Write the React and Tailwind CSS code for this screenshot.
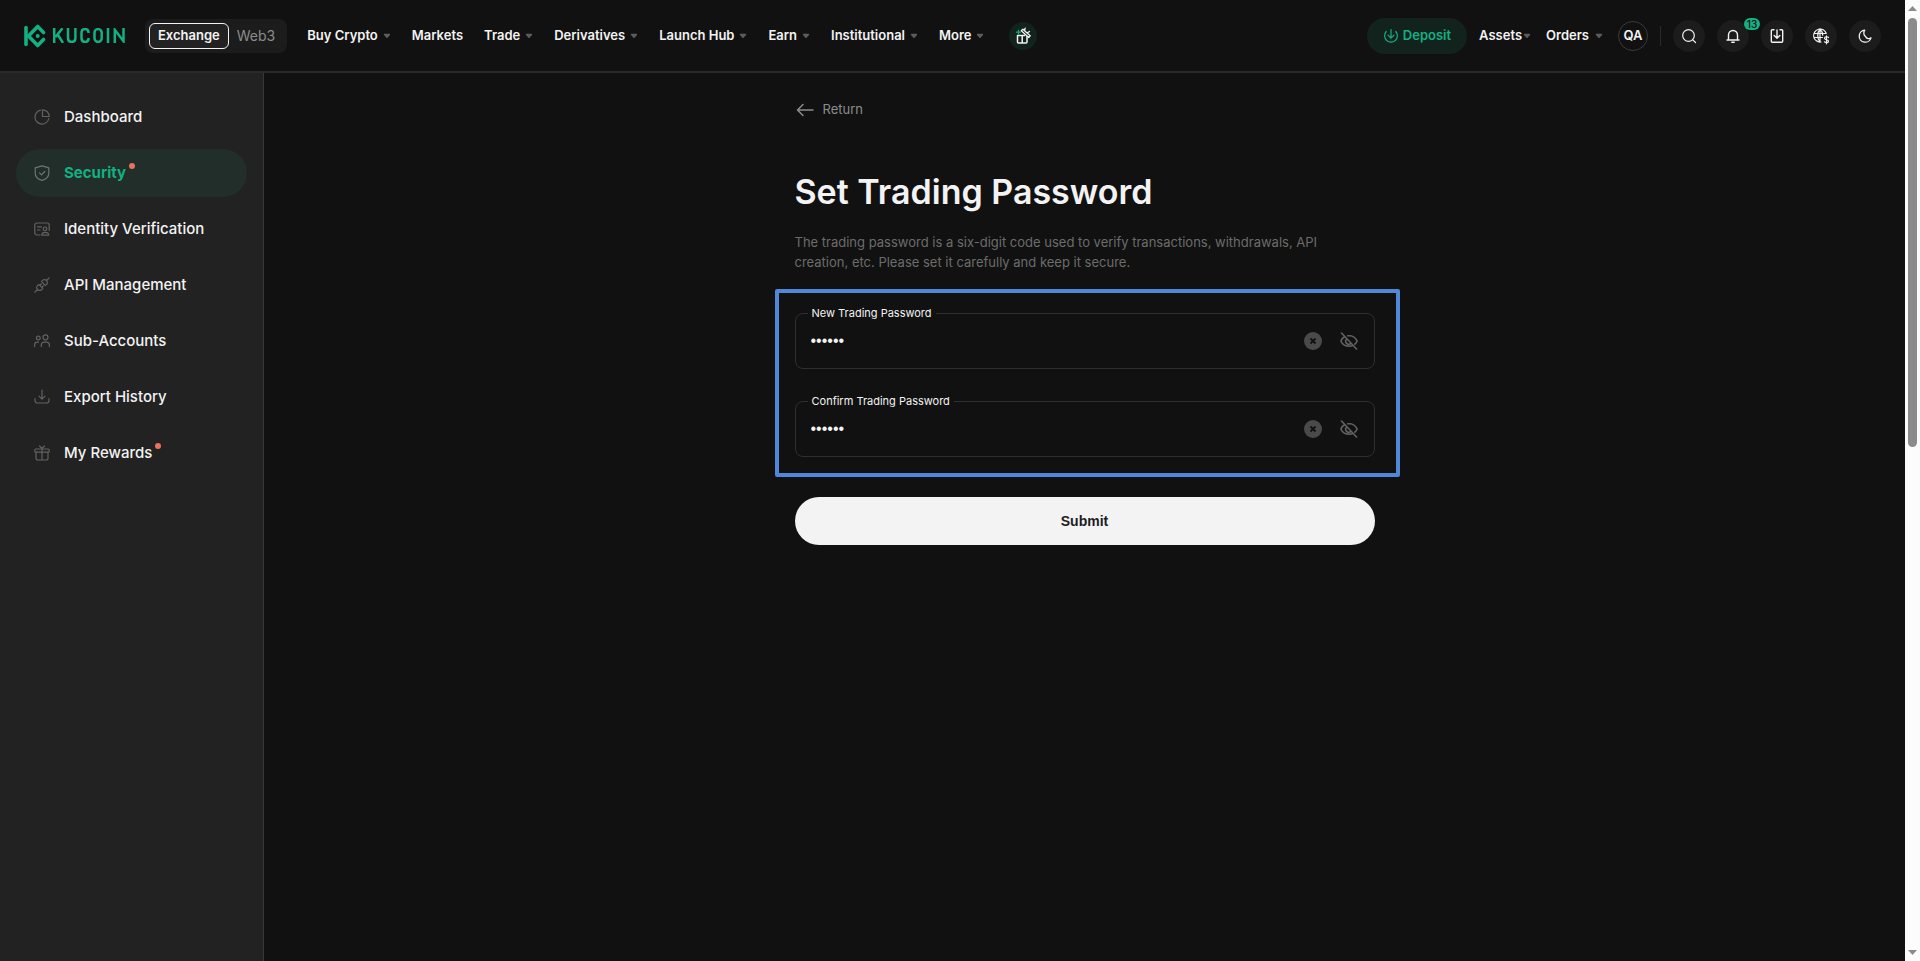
import { useState } from "react";

const Icon = ({ children, className = "size-4", box = "0 0 16 16" }) => (
  <svg viewBox={box} className={className} fill="none" stroke="currentColor" strokeWidth="1.2" strokeLinecap="round" strokeLinejoin="round" aria-hidden="true">
    {children}
  </svg>
);

const Caret = () => (
  <svg viewBox="0 0 8 6" className="h-[6px] w-2 text-[#5c5c5c]" fill="currentColor" aria-hidden="true">
    <path d="M1.6.8h4.8c.7 0 1 .7.6 1.200L4.600 4.700c-.3.4-.9.4-1.200 0L1 2C.6 1.500.900.8 1.600.8z" />
  </svg>
);

const Logo = () => (
  <a href="#home" aria-label="KuCoin" className="flex shrink-0 items-center gap-[7px] text-[#13b082]">
    <svg viewBox="0 0 22 24" className="h-6 w-[22px]" fill="none" stroke="currentColor" strokeWidth="3.600" strokeLinecap="round" strokeLinejoin="round" aria-hidden="true">
      <path d="M2 3.500v17" />
      <path d="M19.500 8.500 13.700 2.500 4.500 12l9.200 9.500 5.800-6" />
      <circle cx="13.700" cy="12" r="2" fill="currentColor" stroke="none" />
    </svg>
    <svg viewBox="0 0 73 15" className="h-[15px] w-[73px]" fill="none" stroke="currentColor" strokeWidth="2.500" aria-hidden="true">
      <path d="M1.200 0v15M9.500.2 2.500 9M4.700 6.500l5.300 8.400" />
      <path d="M15 0v10.200c0 2.400 1.500 3.700 3.700 3.700s3.700-1.300 3.700-3.700V0" />
      <path d="M35.500 5V4.500c0-2.200-1.400-3.400-3.400-3.400s-3.600 1.300-3.600 3.600v5.600c0 2.300 1.500 3.600 3.600 3.600s3.400-1.200 3.400-3.400V10" />
      <rect x="41.500" y="1.100" width="7.200" height="12.800" rx="3.600" />
      <path d="M55 0v15M61.800 15V1.800l8.700 11.400V0" />
    </svg>
  </a>
);

const menu = [
  ["Buy Crypto", true],
  ["Markets", false],
  ["Trade", true],
  ["Derivatives", true],
  ["Launch Hub", true],
  ["Earn", true],
  ["Institutional", true],
  ["More", true],
];

const NavLink = ({ label, caret, gap = "gap-[5px]" }) => (
  <a href="#nav" className={`flex items-center whitespace-nowrap ${gap}`}>
    {label}
    {caret && <Caret />}
  </a>
);

const RoundButton = ({ label, children, badge }) => (
  <button type="button" aria-label={label} className="relative flex size-8 shrink-0 items-center justify-center rounded-full bg-[#1c1c1c] text-[#f3f3f3]">
    {children}
    {badge && (
      <span className="absolute -top-[2px] left-[27px] flex h-[12px] w-4 items-center justify-center rounded-full bg-[#13b082] text-[10px] leading-none font-medium text-[#111]">{badge}</span>
    )}
  </button>
);

const Header = () => (
  <header className="flex h-[73px] items-center justify-between border-b-2 border-[#2a2a2a] px-6 text-[13px] font-semibold text-[#f3f3f3]">
    <div className="flex items-center">
      <Logo />
      <div className="ml-[19px] flex h-[34px] items-center rounded-[8px] bg-[#1c1c1c] px-1">
        <button type="button" className="h-[26px] rounded-[6px] border border-[#f3f3f3] bg-[#222] px-2">Exchange</button>
        <button type="button" className="px-2 text-[14px] font-normal text-[#8c8c8c]">Web3</button>
      </div>
      <nav className="ml-5 flex items-center gap-[21px]">
        {menu.map(([label, caret]) => (
          <NavLink key={label} label={label} caret={caret} />
        ))}
        <button type="button" aria-label="Gifts" className="ml-1 flex size-7 items-center justify-center rounded-full bg-[#12231d]">
          <Icon className="size-[18px]" box="0 0 18 18">
            <path d="M3.500 8.500V15a1 1 0 0 0 1 1h7.500a1 1 0 0 0 1-1V9.500M3.500 8.500h7M8.200 8.500V16" strokeWidth="1.500" />
            <path d="m7.300 3.800 1.600-1.600 7.300 6.600-1.500 1.700zM10.500 3.500l.7-2.300M13 6l2.500-1.500" strokeWidth="1.300" />
            <path d="M4.500 3.200v4M2.500 5.200h4" stroke="#13b082" />
          </Icon>
        </button>
      </nav>
    </div>
    <div className="flex items-center">
      <a href="#deposit" className="flex h-9 items-center gap-1 rounded-full bg-[#12231d] px-4 text-[#13b082]">
        <Icon>
          <path d="M8 1.500V10M5 7.200l3 3 3-3M3.200 3.500A6.400 6.400 0 1 0 12.800 3.500" />
        </Icon>
        Deposit
      </a>
      <div className="ml-3 flex items-center gap-[15px]">
        <NavLink label="Assets" caret gap="gap-px" />
        <NavLink label="Orders" caret gap="gap-[6px]" />
      </div>
      <button type="button" className="ml-[15px] size-[30px] rounded-full border border-[#3a3a3a]">QA</button>
      <span className="mx-3 h-5 w-px bg-[#2a2a2a]" />
      <div className="flex items-center gap-3">
        <RoundButton label="Search"><Icon><circle cx="7.500" cy="7.500" r="5.800" /><path d="m11.800 11.800 2.700 2.700" /></Icon></RoundButton>
        <RoundButton label="Notifications" badge="13"><Icon><path d="M3.500 11.800V7a4.500 4.500 0 0 1 9 0v4.800M2 12h12M6.800 14.300h2.400" strokeWidth="1.400" /></Icon></RoundButton>
        <RoundButton label="Download app"><Icon><path d="M5 1.800H3.300a1 1 0 0 0-1 1v10.400a1 1 0 0 0 1 1h9.400a1 1 0 0 0 1-1V2.800a1 1 0 0 0-1-1H11M8 2v8M5.200 7.500 8 10.300l2.800-2.800" strokeWidth="1.400" /></Icon></RoundButton>
        <RoundButton label="Language and currency"><Icon className="size-[18px]" box="0 0 18 18"><path d="M9 15A6.500 6.500 0 1 1 14.300 6.500M2 6.500h12M2 10.500h8.500M8 2.200C5 5 5 12 8 15M8 2.200c1.800 1.500 2.600 3.500 2.700 6M8 2.200v12.800" /><path d="M16.500 10.500c-.5-1-4-1.200-4 .7s4 1.200 4 3-3.500 1.700-4 .6M14.500 8.800v8" /></Icon></RoundButton>
        <RoundButton label="Theme"><Icon><path d="M7.800 2.200a6 6 0 1 0 6.200 7.600 3.500 3.500 0 0 1-5.400-1.200A4.500 4.500 0 0 1 7.800 2.200z" strokeWidth="1.300" /></Icon></RoundButton>
      </div>
    </div>
  </header>
);

const side = [
  ["Dashboard", <><path d="M6.500 1.200A7 7 0 1 0 14.800 9.500" /><path d="M8.500.8v6.700h6.700A6.700 6.700 0 0 0 8.500.8z" /></>],
  ["Security", <><path d="M8 .8 14.800 2.800v5.400c0 3.800-3 6-6.800 7.200-3.800-1.200-6.800-3.400-6.800-7.200V2.800z" /><path d="m5.500 7.800 2 2 3.300-3.300" /></>, true],
  ["Identity Verification", <><path d="M6 14H2.800a2 2 0 0 1-2-2V4a2 2 0 0 1 2-2h10.400a2 2 0 0 1 2 2v5.500M3.500 5.800H7.500M3.500 9H6" /><circle cx="11" cy="7.800" r="1.800" /><path d="M7.800 14.200c0-2.500 1.500-2.800 3.200-2.800s3.700.3 3.700 2.800z" /></>],
  ["API Management", <><path d="m.8 15.200 2.700-2.700M12.500 3.500 15.200.8M3.500 12.500C1.800 10.500 3 8.500 5 7.500l3.800 3.800c-1.300 2-3.300 3-5.300 1.200zM12.500 3.500c-2-1.600-4-.7-5 1.200l3.800 3.800c2-1.200 2.900-3 1.200-5zM5.800 8.300 7.200 7M7.800 10.300 9.200 9" /></>],
  ["Sub-Accounts", <><circle cx="4.300" cy="5" r="1.900" /><circle cx="11.500" cy="4.300" r="2.500" /><path d="M.6 13.500V12c0-1.800 1-2.800 2.700-2.800h1.200M7.300 13.500v-1.400c0-1.800 1.200-2.900 2.900-2.900h2.300c1.700 0 2.900 1.100 2.900 2.900v1.400" /></>],
  ["Export History", <path d="M8 1V10M5 7.200l3 3 3-3M1 9.500v2A2.500 2.500 0 0 0 3.500 14h9a2.500 2.500 0 0 0 2.500-2.500v-2" />],
  ["My Rewards", <><rect x=".8" y="4" width="14.400" height="3.200" rx="1" /><path d="M2 7.200v6A1.800 1.800 0 0 0 3.800 15h8.400a1.800 1.800 0 0 0 1.800-1.800v-6M8 4v11M5.500 1 8 3.500 10.500 1" /></>, true],
];

const Sidebar = () => (
  <aside className="w-[264px] shrink-0 border-r border-[#383838] bg-[#222] px-4 pt-5">
    <ul className="flex flex-col gap-2">
      {side.map(([label, icon, dot]) => {
        const active = label === "Security";
        return (
          <li key={label}>
            <a href="#side" className={`flex h-12 items-center gap-[14px] rounded-full pl-[18px] text-[15px] ${active ? "bg-[#212e2a] font-bold text-[#13b082]" : "font-medium text-[#f3f3f3]"}`}>
              <Icon className={`size-4 ${active ? "text-[#6c7572]" : "text-[#626262]"}`}>{icon}</Icon>
              <span className="relative">
                {label}
                {dot && <span className="absolute top-px -right-[9px] size-[6px] rounded-full bg-[#ec705c]" />}
              </span>
            </a>
          </li>
        );
      })}
    </ul>
  </aside>
);

const PasswordField = ({ id, label }) => {
  const [value, setValue] = useState("123456");
  const [shown, setShown] = useState(false);
  return (
    <div className="relative">
      <label htmlFor={id} className="absolute -top-2 left-[13px] bg-[#111] px-1 text-[11px] leading-4 text-[#f3f3f3]">{label}</label>
      <div className="flex h-14 items-center rounded-[8px] border border-[#2f2f2f] pr-4 pl-[15px]">
        <input id={id} type={shown ? "text" : "password"} value={value} onChange={(e) => setValue(e.target.value)} className="min-w-0 flex-1 bg-transparent font-['Liberation_Sans',sans-serif] text-[16px] text-[#f3f3f3] outline-none" />
        <button type="button" aria-label="Clear" onClick={() => setValue("")} className="text-[#4a4a4a]">
          <svg viewBox="0 0 18 18" className="size-[18px]" aria-hidden="true">
            <circle cx="9" cy="9" r="9" fill="currentColor" />
            <path d="m6.500 6.500 5 5m0-5-5 5" stroke="#111" strokeWidth="1.800" />
          </svg>
        </button>
        <button type="button" aria-label="Show password" onClick={() => setShown(!shown)} className="ml-[18px] text-[#626262]">
          <Icon className="size-[18px]" box="0 0 18 18">
            <path d="m1.500 1 15 16M5 4.500C3 5.500 1.500 7.200.9 9c1.300 3.200 4.400 5.300 8.100 5.300 1.500 0 2.900-.4 4.100-1M7.800 3.800C12 3.200 15.700 5.500 17.100 9c-.4 1.200-1.200 2.200-2.200 3.100M6.300 7.500a3 3 0 0 0 4.200 4.200" strokeWidth="1.600" />
          </Icon>
        </button>
      </div>
    </div>
  );
};

const Main = () => (
  <main className="flex min-w-0 flex-1 flex-col items-center pt-[25px]">
    <form className="w-[580px] max-w-full" onSubmit={(e) => e.preventDefault()}>
      <a href="#return" className="flex h-6 w-fit items-center gap-2 text-[13px] text-[#8c8c8c]">
        <Icon className="h-4 w-5" box="0 0 20 16">
          <path d="M18 8H2.500M8 2.500 2.500 8 8 13.500" strokeWidth="1.500" />
        </Icon>
        Return
      </a>
      <h1 className="mt-[45px] text-[34px] leading-[50px] font-semibold text-[#f3f3f3]">Set Trading Password</h1>
      <p className="mt-[15px] text-[13px] leading-5 text-[#6c6c6c]">
        The trading password is a six-digit code used to verify transactions, withdrawals, API
        <br />
        creation, etc. Please set it carefully and keep it secure.
      </p>
      <div className="-mr-[25px] -ml-5 mt-[17px] flex flex-col gap-8 rounded-[2px] border-4 border-[#4f87d9] pt-5 pr-[21px] pb-4 pl-4">
        <PasswordField id="new-password" label="New Trading Password" />
        <PasswordField id="confirm-password" label="Confirm Trading Password" />
      </div>
      <button type="submit" className="mt-5 h-12 w-full rounded-full bg-[#f3f3f3] font-['Liberation_Sans',sans-serif] text-[14px] font-bold text-[#1d1d1d]">Submit</button>
    </form>
  </main>
);

const Scrollbar = () => (
  <div className="flex w-[15px] shrink-0 flex-col items-center bg-[#fcfcfc] py-[6px] text-[#8b8b8b]" aria-hidden="true">
    <svg viewBox="0 0 9 5" className="h-[5px] w-[9px]" fill="currentColor"><path d="M4.500 0 9 5H0z" /></svg>
    <div className="mt-[7px] flex w-[9px] flex-1 flex-col">
      <div className="h-[46%] rounded-full bg-[#8b8b8b]" />
    </div>
    <svg viewBox="0 0 9 5" className="h-[5px] w-[9px]" fill="currentColor"><path d="M4.500 5 9 0H0z" /></svg>
  </div>
);

export default function App() {
  return (
    <div className="flex min-h-screen bg-[#111] font-['Inter',sans-serif]">
      <div className="flex min-w-0 flex-1 flex-col">
        <Header />
        <div className="flex flex-1">
          <Sidebar />
          <Main />
        </div>
      </div>
      <Scrollbar />
    </div>
  );
}
